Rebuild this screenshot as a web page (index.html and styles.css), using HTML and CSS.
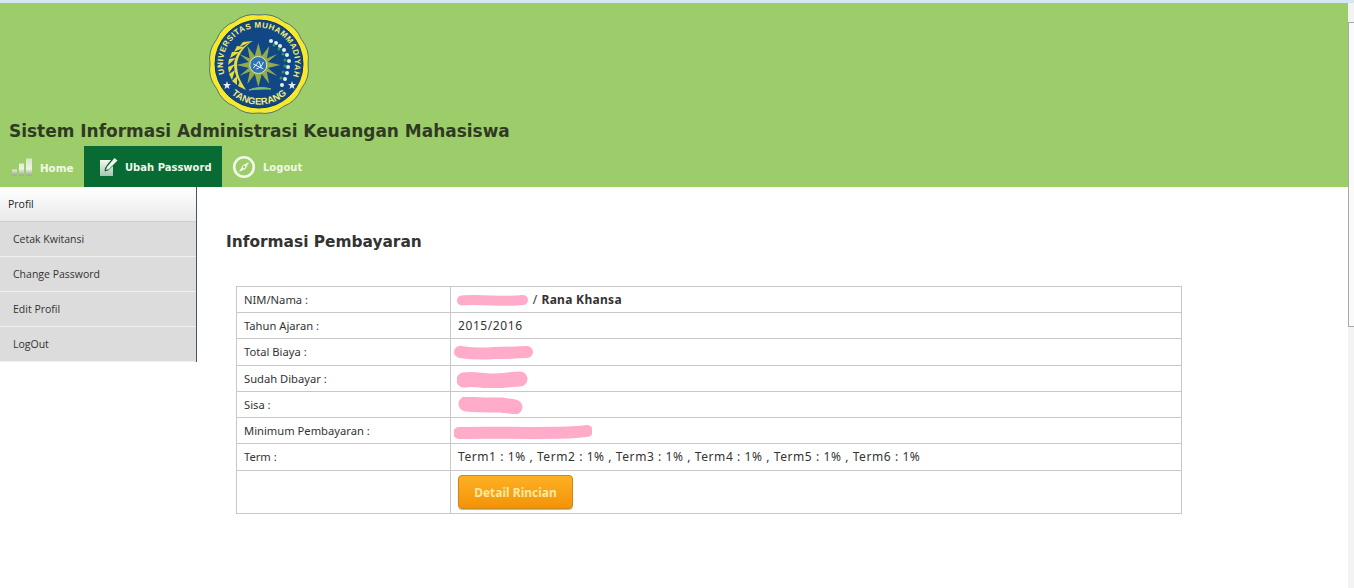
FILE: index.html
```html
<!DOCTYPE html>
<html lang="id">
<head>
<meta charset="utf-8">
<title>Sistem Informasi Administrasi Keuangan Mahasiswa</title>
<link rel="stylesheet" href="styles.css">
</head>
<body>
<div class="topstrip"></div>
<div class="shell">
  <div class="page">
    <header class="header">
      <div class="logo-wrap">
        <svg class="logo" width="100" height="100" viewBox="0 0 100 100">
          <defs>
            <path id="arcTop" d="M15.500 60 A36 36 0 1 1 84.500 60"/>
            <path id="arcBottom" d="M17 74 A41 41 0 0 0 83 74"/>
          </defs>
          <path class="l-out" d="M50 1 A31 31 0 0 1 74.500 7.600 A31 31 0 0 1 92.400 25.500 A31 31 0 0 1 99 50 A31 31 0 0 1 92.400 74.500 A31 31 0 0 1 74.500 92.400 A31 31 0 0 1 50 99 A31 31 0 0 1 25.500 92.400 A31 31 0 0 1 7.600 74.500 A31 31 0 0 1 1 50 A31 31 0 0 1 7.600 25.500 A31 31 0 0 1 25.500 7.600 A31 31 0 0 1 50 1 Z"/>
          <circle class="l-navy" cx="50" cy="50" r="44"/>
          <text class="l-text"><textPath href="#arcTop" startOffset="0" textLength="136" lengthAdjust="spacing">UNIVERSITAS MUHAMMADIYAH</textPath></text>
          <text class="l-text l-text-b"><textPath href="#arcBottom" startOffset="50%" text-anchor="middle">TANGERANG</textPath></text>
          <g class="l-wreath-leaf">
            <path d="M44 27 L34 28 L30 33 Z"/><path d="M36 33 L28 32 L25 38 Z"/><path d="M31 38 L23 38 L21 44 Z"/><path d="M27 44 L20 45 L19 51 Z"/><path d="M26 50 L19 53 L20 59 Z"/><path d="M26 56 L20 60 L23 66 Z"/><path d="M28 62 L23 67 L28 71 Z"/><path d="M31 67 L29 72 L37 76 Z"/>
            <path d="M44 27 C33 31 26 41 25 50 C25 60 29 68 37 76 C31 67 28 60 28 50 C29 41 35 32 44 27 Z"/>
          </g>
          <g class="l-dots">
            <circle cx="62" cy="27" r="2"/><circle cx="67" cy="29" r="2"/><circle cx="71" cy="32" r="2"/><circle cx="75" cy="36" r="2"/><circle cx="78" cy="41" r="2"/><circle cx="80" cy="47" r="2"/><circle cx="79" cy="53" r="2"/><circle cx="78" cy="59" r="2"/><circle cx="76" cy="65" r="2"/><circle cx="73" cy="71" r="2"/>
          </g>
          <g class="l-leaves">
            <circle cx="65" cy="31" r="1.500"/><circle cx="70" cy="35" r="1.500"/><circle cx="74" cy="40" r="1.500"/><circle cx="76" cy="46" r="1.500"/><circle cx="76" cy="52" r="1.500"/><circle cx="74" cy="58" r="1.500"/><circle cx="72" cy="64" r="1.500"/>
          </g>
          <g transform="translate(49.300 51)">
            <path class="l-sun" d="M0 -22 L3.500 -9 L11 -19 L8.500 -6.500 L19 -11 L9.500 -3 L22 0 L9.500 3 L19 11 L8.500 6.500 L11 19 L3.500 9 L0 22 L-3.500 9 L-11 19 L-8.500 6.500 L-19 11 L-9.500 3 L-22 0 L-9.500 -3 L-19 -11 L-8.500 -6.500 L-11 -19 L-3.500 -9 Z"/>
            <circle class="l-core" r="8.500"/>
            <path class="l-script" d="M-5 3 C-3 1 -1 -2 1 -4 M-2 4 C1 3 4 1 5 -3 M1 -3 L3 3 M-5 -1 L5 4"/>
          </g>
          <path class="l-star" d="M18 67 L19 70 L22 70 L19.600 72 L20.500 75 L18 73.200 L15.500 75 L16.400 72 L14 70 L17 70 Z"/>
          <path class="l-star" d="M83 67 L84 70 L87 70 L84.600 72 L85.500 75 L83 73.200 L80.500 75 L81.400 72 L79 70 L82 70 Z"/>
          <path class="l-base" d="M40 76 C47 73 55 73 62 75 C55 75 47 75 40 76 Z"/>
        </svg>
      </div>
      <h1 class="title">Sistem Informasi Administrasi Keuangan Mahasiswa</h1>
      <nav class="nav">
        <a class="nav-item nav-home" href="#">
          <svg class="nav-ico" width="22" height="20" viewBox="0 0 22 20">
            <defs>
              <linearGradient id="barFade" gradientUnits="userSpaceOnUse" x1="0" y1="1" x2="0" y2="19">
                <stop offset="0" stop-color="#d5e3c2"/>
                <stop offset="0.6" stop-color="#eef4e4"/>
                <stop offset="1" stop-color="#8fa87a"/>
              </linearGradient>
            </defs>
            <rect class="ico-bar" x="1" y="12.500" width="5" height="6"/>
            <rect class="ico-bar" x="8" y="6.500" width="5" height="12"/>
            <rect class="ico-bar" x="15" y="1.500" width="6" height="17"/>
          </svg>
          <span>Home</span>
        </a>
        <a class="nav-item nav-active" href="#">
          <svg class="nav-ico" width="20" height="20" viewBox="0 0 20 20">
            <defs>
              <linearGradient id="padFade" x1="0" y1="0" x2="0" y2="1">
                <stop offset="0" stop-color="#f5f8f2"/>
                <stop offset="1" stop-color="#a9c4b2"/>
              </linearGradient>
            </defs>
            <path class="ico-pad" d="M1 3 H12 L9 6.500 L6 11 L5.500 14.500 L9 13.500 L14 9 V19 H1 Z"/>
            <path class="ico-fill" d="M15.500 1 L18.500 3.500 L10 12 L7 13 L8 10 Z"/>
          </svg>
          <span>Ubah Password</span>
        </a>
        <a class="nav-item nav-logout" href="#">
          <svg class="nav-ico" width="24" height="24" viewBox="0 0 24 24">
            <circle class="ico-ring" cx="12" cy="12" r="9.800"/>
            <path class="ico-fill" d="M17 7 L13.500 14 L7 17 L10.500 10.500 Z"/>
            <circle class="ico-dot" cx="12" cy="12" r="1.300"/>
          </svg>
          <span>Logout</span>
        </a>
      </nav>
    </header>
    <div class="body">
      <aside class="sidebar">
        <a class="side-head" href="#">Profil</a>
        <a class="side-link" href="#">Cetak Kwitansi</a>
        <a class="side-link" href="#">Change Password</a>
        <a class="side-link" href="#">Edit Profil</a>
        <a class="side-link" href="#">LogOut</a>
      </aside>
      <main class="content">
        <h2 class="heading">Informasi Pembayaran</h2>
        <table class="info">
          <tr class="r26"><td class="lab">NIM/Nama :</td><td class="val"><svg class="blot" width="72" height="13" viewBox="0 0 72 13"><path d="M5 6.500 C22 5 50 8 66 6"/></svg> / <strong>Rana Khansa</strong></td></tr>
          <tr class="r26"><td class="lab">Tahun Ajaran :</td><td class="val">2015/2016</td></tr>
          <tr class="r27"><td class="lab">Total Biaya :</td><td class="val"><svg class="blot blot-l" width="80" height="15" viewBox="0 0 80 15"><path d="M6 7 C20 9 30 9 40 8 C55 8 65 7 73 7"/></svg></td></tr>
          <tr class="r26"><td class="lab">Sudah Dibayar :</td><td class="val"><svg class="blot blot-thick" width="72" height="17" viewBox="0 0 72 17"><path d="M7 9 C18 7 24 10 34 10 C46 10 55 8 63 8"/></svg></td></tr>
          <tr class="r26"><td class="lab">Sisa :</td><td class="val"><svg class="blot blot-thick" width="68" height="17" viewBox="0 0 68 17"><path d="M9 7 C20 8 34 8 44 8 C50 9 55 9 58 10"/></svg></td></tr>
          <tr class="r26"><td class="lab">Minimum Pembayaran :</td><td class="val"><svg class="blot blot-l" width="138" height="15" viewBox="0 0 138 15"><path d="M5 9 C40 8 90 10 122 8 C127 8 130 7 133 7"/></svg></td></tr>
          <tr class="r27"><td class="lab">Term :</td><td class="val">Term1 : 1% , Term2 : 1% , Term3 : 1% , Term4 : 1% , Term5 : 1% , Term6 : 1%</td></tr>
          <tr class="r43"><td class="lab"></td><td class="val"><button class="btn" type="button">Detail Rincian</button></td></tr>
        </table>
      </main>
    </div>
  </div>
  <div class="scrollbar"><div class="thumb"></div></div>
</div>
</body>
</html>
```

FILE: styles.css
```css
* { box-sizing: border-box; }
html, body { margin: 0; padding: 0; height: 100%; overflow: hidden; background: #fff; }
body { font-family: "DejaVu Sans", Verdana, sans-serif; color: #333; }

.topstrip { height: 3px; background: #d5e6f5; }
.shell { display: flex; height: 585px; }
.page { flex: 1; min-width: 0; }

.header { height: 184px; background: #9dcd6a; display: flex; flex-direction: column; }
.logo-wrap { padding: 11px 0 0 209px; height: 111px; }
.logo { display: block; }
.l-out { fill: #f5e92d; stroke: #33558a; stroke-width: 0.800; }
.l-navy { fill: #114784; stroke: #12335f; stroke-width: 1; }
.l-text { fill: #f4ec78; font: bold 8px "Liberation Sans", Arial, sans-serif; }
.l-text-b { font-size: 9.500px; }
.l-wreath-leaf path { fill: #e8dc3a; }
.l-dots circle { fill: #e4f0ea; }
.l-leaves circle { fill: #2f9a5a; }
.l-sun { fill: #93ab4a; }
.l-core { fill: #2f75b5; stroke: #dde6b0; stroke-width: 1; }
.l-script { fill: none; stroke: #e6eef5; stroke-width: 1; }
.l-star { fill: #e9eff7; }
.l-base { fill: #7fc06a; stroke: #7fc06a; stroke-width: 1; }

.title { margin: 0; padding-left: 9px; height: 32px; font-size: 16.970px; line-height: 35px; font-weight: bold; color: #2f3a22; white-space: nowrap; }

.nav { display: flex; height: 41px; }
.nav-item { display: flex; align-items: center; height: 41px; color: #f1f8e6; text-decoration: none; font-size: 10px; font-weight: bold; }
.nav-item span { padding-top: 2px; }
.nav-home { width: 84px; padding-left: 11px; gap: 7px; }
.nav-home span { font-size: 10.300px; }
.nav-active { width: 138px; padding-left: 15px; gap: 6px; background: #096b34; color: #eef6ea; }
.nav-logout { padding-left: 10px; gap: 7px; }
.ico-bar { fill: url(#barFade); }
.ico-pad { fill: url(#padFade); }
.ico-fill { fill: #f0f5ea; }
.ico-ring { fill: none; stroke: #f3f8e8; stroke-width: 2.600; }
.ico-dot { fill: #9dcd6a; }

.body { display: flex; align-items: flex-start; }
.sidebar { width: 197px; flex: none; border-right: 1px solid #44566a; font-family: "Open Sans", "Noto Sans", sans-serif; font-size: 10.500px; color: #222; }
.side-head { display: block; height: 35px; line-height: 35px; padding-left: 8px; color: #222; text-decoration: none; background: linear-gradient(#ffffff, #eaeaea); border-bottom: 1px solid #cfcfcf; }
.side-link { display: block; height: 35px; line-height: 35px; padding-left: 13px; color: #333; text-decoration: none; background: #dcdcdc; border-bottom: 1px solid #f0f0f0; }

.content { flex: 1; min-width: 0; padding-left: 29px; }
.heading { margin: 0; padding-top: 45px; height: 99px; font-size: 15.400px; line-height: 20px; font-weight: bold; color: #333; }

.info { width: 946px; margin-left: 10px; border-collapse: collapse; table-layout: fixed; font: 12px "Noto Sans", "Open Sans", sans-serif; color: #333; }
.info td { border: 1px solid #c8c8c8; padding: 0 7px; white-space: nowrap; }
.info .lab { width: 214px; font-size: 11.200px; }
.info .val { letter-spacing: 0.580px; }
.info strong { letter-spacing: 0.300px; }
.r26 { height: 26px; }
.r27 { height: 27px; }
.r27 td { padding-bottom: 2px; }
.r43 { height: 43px; }

.blot { display: inline-block; vertical-align: middle; margin-left: -1px; }
.blot path { fill: none; stroke: #ffabc9; stroke-width: 10; stroke-linecap: round; }
.blot-l { margin-left: -4px; }
.blot-l path { stroke-width: 12; }
.blot-thick path { stroke-width: 15; }

.btn { display: block; width: 115px; height: 34px; padding: 0; border: 1px solid #c98a1c; border-radius: 4px; background: linear-gradient(#fdb024, #f59207); color: #fdeaa0; font: bold 12px "Noto Sans", "Open Sans", sans-serif; box-shadow: 0 1px 1px #b9b9b9; }

.scrollbar { width: 6px; flex: none; background: #f3f3f3; padding-top: 19px; }
.thumb { height: 305px; background: #fafafa; border-left: 1px solid #a8a8a8; border-top: 1px solid #a8a8a8; border-bottom: 1px solid #a8a8a8; }
```
